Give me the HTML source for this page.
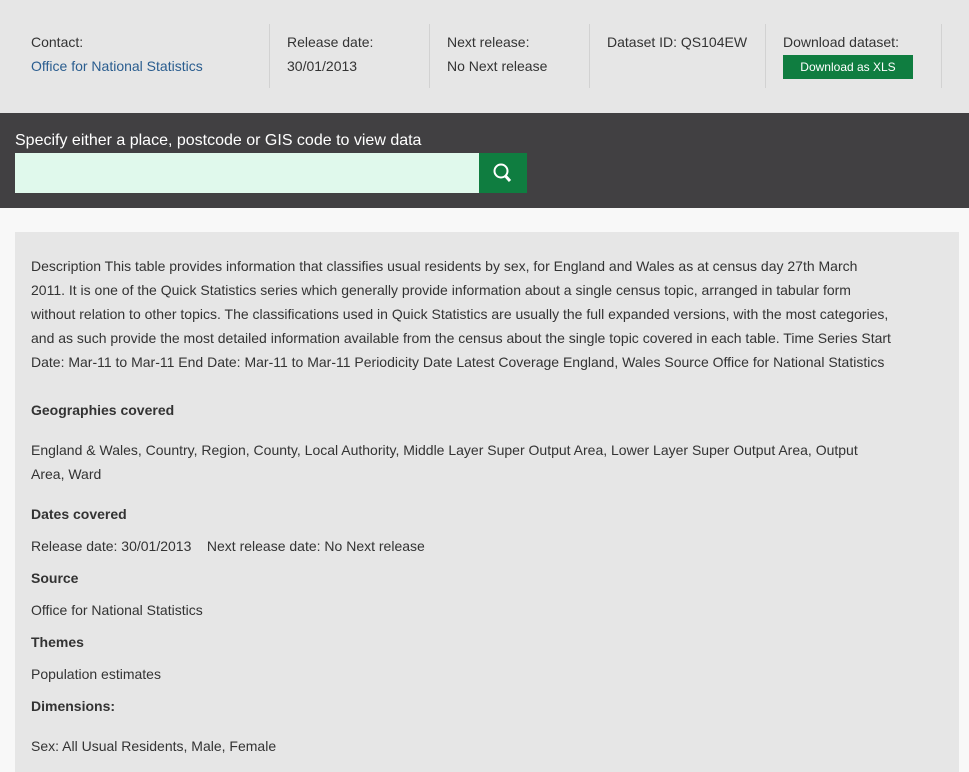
<!DOCTYPE html><html><head><style>
body{margin:0;background:#f8f8f8;font-family:"Liberation Sans",sans-serif;color:#333;width:969px;height:762px;overflow:hidden}
.top{background:#e6e6e6;height:113px;position:relative}
.c{position:absolute;top:24px;height:64px;border-right:1px solid #d2d2d2;font-size:14px;line-height:24px;padding-top:6px;box-sizing:border-box}
.c a{color:#2a5d8f;text-decoration:none}
.btn{display:inline-block;background:#0f7d40;color:#fff;font-size:12px;width:130px;height:24px;line-height:24px;text-align:center;margin-top:0}
.dark{background:#414042;height:95px;position:relative}
.lab{position:absolute;left:15px;top:19px;color:#fff;font-size:16px}
.inp{position:absolute;left:15px;top:40px;width:464px;height:40px;background:#e0f9ec}
.sb{position:absolute;left:479px;top:40px;width:48px;height:40px;background:#0f7d40}
.panel{position:absolute;left:15px;top:232px;width:944px;height:540px;background:#e6e6e6;font-size:14px;line-height:24px;padding:22px 16px;box-sizing:border-box;overflow:hidden}
.panel p{margin:0;white-space:nowrap}
h4{margin:0;font-size:14px}
</style></head><body>
<div class="top">
<div class="c" style="left:31px;width:239px">Contact:<br><a>Office for National Statistics</a></div>
<div class="c" style="left:287px;width:143px">Release date:<br>30/01/2013</div>
<div class="c" style="left:447px;width:143px">Next release:<br>No Next release</div>
<div class="c" style="left:607px;width:159px">Dataset ID: QS104EW</div>
<div class="c" style="left:783px;width:159px">Download dataset:<br><span class="btn">Download as XLS</span></div>
</div>
<div class="dark"><div class="lab">Specify either a place, postcode or GIS code to view data</div><div class="inp"></div>
<div class="sb"><svg width="48" height="40"><circle cx="22" cy="18" r="6.5" fill="none" stroke="#fff" stroke-width="2"/><line x1="26.5" y1="23" x2="31" y2="28" stroke="#fff" stroke-width="3"/></svg></div></div>
<div class="panel">
<p>Description This table provides information that classifies usual residents by sex, for England and Wales as at census day 27th March<br>2011. It is one of the Quick Statistics series which generally provide information about a single census topic, arranged in tabular form<br>without relation to other topics. The classifications used in Quick Statistics are usually the full expanded versions, with the most categories,<br>and as such provide the most detailed information available from the census about the single topic covered in each table. Time Series Start<br>Date: Mar-11 to Mar-11 End Date: Mar-11 to Mar-11 Periodicity Date Latest Coverage England, Wales Source Office for National Statistics</p>
<h4 style="margin-top:24px">Geographies covered</h4>
<p style="margin-top:16px">England &amp; Wales, Country, Region, County, Local Authority, Middle Layer Super Output Area, Lower Layer Super Output Area, Output<br>Area, Ward</p>
<h4 style="margin-top:16px">Dates covered</h4>
<p style="margin-top:8px">Release date: 30/01/2013 &nbsp;&nbsp;&nbsp;Next release date: No Next release</p>
<h4 style="margin-top:8px">Source</h4>
<p style="margin-top:8px">Office for National Statistics</p>
<h4 style="margin-top:8px">Themes</h4>
<p style="margin-top:8px">Population estimates</p>
<h4 style="margin-top:8px">Dimensions:</h4>
<p style="margin-top:16px">Sex: All Usual Residents, Male, Female</p>
</div>
</body></html>
